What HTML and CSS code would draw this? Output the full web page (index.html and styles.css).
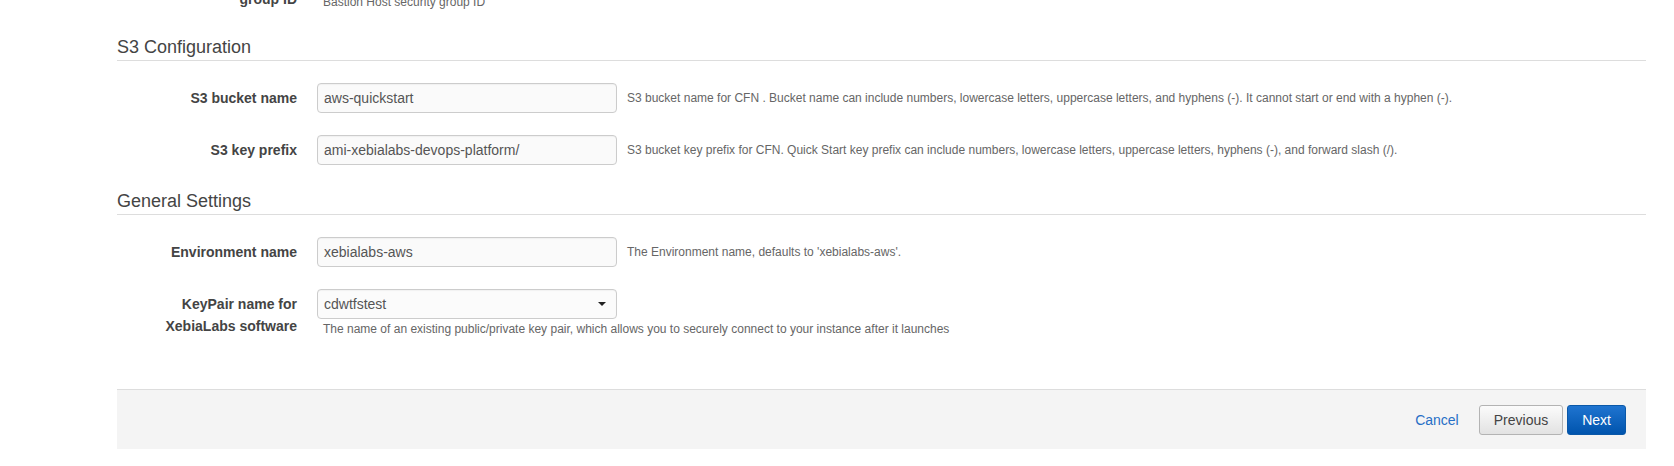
FILE: index.html
```html
<!DOCTYPE html>
<html lang="en">
<head>
<meta charset="utf-8">
<title>Specify Details</title>
<link rel="stylesheet" href="styles.css">
</head>
<body>
<div class="page">
  <div class="row">
    <div class="label">Bastion Host security<br>group ID</div>
    <div class="control stacked">
      <div class="field select"><span class="value">sg-0a1b2c3d</span><span class="caret"></span></div>
      <div class="help below">Bastion Host security group ID</div>
    </div>
  </div>

  <h2 class="section-title">S3 Configuration</h2>
  <div class="row">
    <div class="label">S3 bucket name</div>
    <div class="control inline">
      <div class="field"><span class="value">aws-quickstart</span></div>
      <div class="help side">S3 bucket name for CFN . Bucket name can include numbers, lowercase letters, uppercase letters, and hyphens (-). It cannot start or end with a hyphen (-).</div>
    </div>
  </div>
  <div class="row">
    <div class="label">S3 key prefix</div>
    <div class="control inline">
      <div class="field"><span class="value">ami-xebialabs-devops-platform/</span></div>
      <div class="help side">S3 bucket key prefix for CFN. Quick Start key prefix can include numbers, lowercase letters, uppercase letters, hyphens (-), and forward slash (/).</div>
    </div>
  </div>

  <h2 class="section-title">General Settings</h2>
  <div class="row">
    <div class="label">Environment name</div>
    <div class="control inline">
      <div class="field"><span class="value">xebialabs-aws</span></div>
      <div class="help side">The Environment name, defaults to 'xebialabs-aws'.</div>
    </div>
  </div>
  <div class="row">
    <div class="label">KeyPair name for<br>XebiaLabs software</div>
    <div class="control stacked">
      <div class="field select"><span class="value">cdwtfstest</span><span class="caret"></span></div>
      <div class="help below">The name of an existing public/private key pair, which allows you to securely connect to your instance after it launches</div>
    </div>
  </div>

  <div class="footer">
    <a class="cancel" href="#">Cancel</a>
    <button class="btn btn-default" type="button">Previous</button>
    <button class="btn btn-primary" type="button">Next</button>
  </div>
</div>
</body>
</html>
```

FILE: styles.css
```css
* { box-sizing: border-box; }

html, body {
  margin: 0;
  padding: 0;
  background: #ffffff;
  overflow: hidden;
}

body {
  font-family: "Liberation Sans", Arial, sans-serif;
  color: #444444;
  font-size: 14px;
}

.page {
  margin-top: -38px;
  padding-left: 117px;
  padding-right: 28px;
}

.row {
  display: flex;
  align-items: flex-start;
  margin-bottom: 22px;
}

.label {
  width: 180px;
  flex: none;
  margin-right: 20px;
  padding-top: 4px;
  text-align: right;
  font-weight: bold;
  font-size: 14px;
  line-height: 22px;
  color: #444444;
}

.control.inline {
  display: flex;
  align-items: center;
}

.control.stacked {
  display: flex;
  flex-direction: column;
}

.field {
  width: 300px;
  height: 30px;
  flex: none;
  display: flex;
  align-items: center;
  padding: 0 6px;
  border: 1px solid #cccccc;
  border-radius: 4px;
  background: #fafafa;
  box-shadow: inset 0 1px 1px rgba(0, 0, 0, 0.04);
  font-size: 14px;
  color: #555555;
}

.field .value {
  flex: 1;
  white-space: nowrap;
}

.field.select {
  background: #fbfbfb;
  padding-right: 10px;
}

.caret {
  width: 0;
  height: 0;
  border-left: 4px solid transparent;
  border-right: 4px solid transparent;
  border-top: 4px solid #222222;
}

.help {
  font-size: 12px;
  line-height: 17px;
  color: #666666;
  white-space: nowrap;
}

.help.side {
  margin-left: 10px;
}

.help.below {
  margin-top: 2px;
  padding-left: 6px;
}

.section-title {
  margin: 0 0 22px 0;
  padding-top: 1px;
  font-size: 18px;
  line-height: 26px;
  font-weight: normal;
  color: #444444;
  border-bottom: 1px solid #dddddd;
}

.footer {
  margin-top: 51px;
  height: 60px;
  display: flex;
  align-items: center;
  justify-content: flex-end;
  padding-right: 20px;
  background: #f4f4f4;
  border-top: 1px solid #dddddd;
}

.cancel {
  font-size: 14px;
  color: #276fc6;
  text-decoration: none;
  margin-right: 20px;
}

.btn {
  height: 30px;
  padding: 0 14px;
  border-radius: 3px;
  font-family: "Liberation Sans", Arial, sans-serif;
  font-size: 14px;
  line-height: 28px;
  cursor: pointer;
}

.btn-default {
  color: #444444;
  border: 1px solid #b3b3b3;
  background: linear-gradient(#fbfbfb, #e2e2e2);
  margin-right: 4px;
}

.btn-primary {
  color: #ffffff;
  border: 1px solid #0a58a8;
  background: linear-gradient(#1f74d0, #0054ad);
}
```
